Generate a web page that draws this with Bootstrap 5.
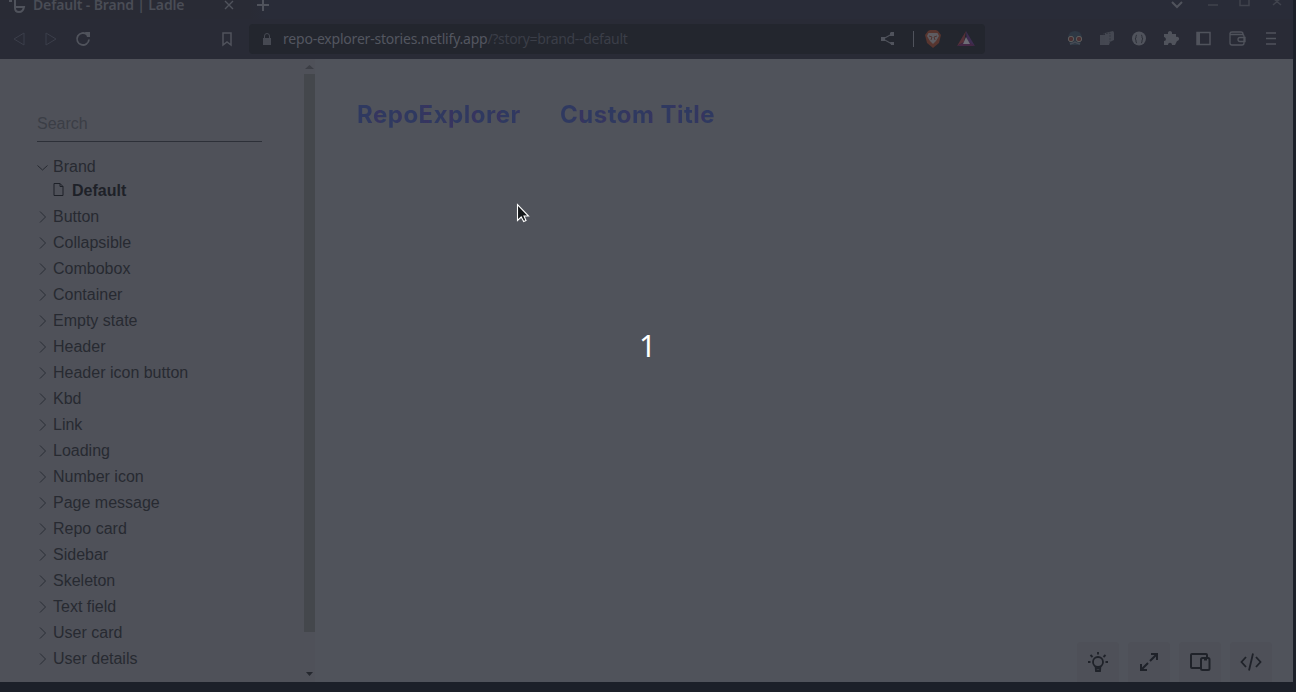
<!DOCTYPE html>
<html lang="en">
<head>
<meta charset="utf-8">
<title>Default - Brand | Ladle</title>
<link href="https://cdn.jsdelivr.net/npm/bootstrap@5.3.0/dist/css/bootstrap.min.css" rel="stylesheet">
<style>
body{background:#1c2029;font-family:"Liberation Sans",sans-serif;font-size:16px}
svg{display:block;flex:none;fill:none;stroke:currentColor}
.desktop{width:1296px;height:692px}
.browser{width:1293px;height:682px}
.chrome{height:59px;background:#292b36;color:#50535c;font-family:"Noto Sans",sans-serif;font-size:14px}
.tabs{height:19px;background:linear-gradient(90deg,#292b35 250px,#292c38 265px)}
.tabs>*{height:19px}
.tab-title{width:196px;margin-left:-4px;padding-left:11px;line-height:13px;margin-top:-2px;font-weight:600;letter-spacing:-.15px;white-space:nowrap;color:#4a4d56}
.tools{height:40px}
.address{width:736px;height:30px;margin-left:15px;background:#23262e;border-radius:4px}
.url{width:590px;margin-left:10px;white-space:nowrap;line-height:28px;letter-spacing:-.21px;color:#535660}
.url span{letter-spacing:-.33px;color:#3b3e48}
.page-area{background:#50535b;color:#272a31}
.side{width:304px;padding:44px 42px 0 37px;background:#4f5159}
.search{height:39px;border:0;border-bottom:1px solid #2d3038;border-radius:0;background:none!important;padding:3px 0 0;font-size:16px}
.search::placeholder{color:#3b3e46;opacity:1}
.tree{padding-top:12px;margin:0}
.tree li{height:26px;line-height:26px;white-space:nowrap}
.tree li:first-child{height:25px}
.tree .leaf{height:23px;line-height:23px;margin-bottom:2px;padding-left:17px;font-weight:700;color:#1e2128}
.tree svg{width:11px;height:12px;margin-right:5px;margin-left:0}
.tree .leaf svg{width:11px;height:15px;margin-right:7px;margin-top:-3px;margin-left:-1px;margin-right:8px}
.track{width:11px;padding:6px 0 4px;background:#4f5159}
.thumb{height:558px;background:#44474c;margin-top:5px}
.stories{padding:38px 0 0 42px;font-family:Inter,sans-serif;font-weight:700;font-size:24px;line-height:36px;letter-spacing:.5px}
.title-a{width:203px}
.brand-text{background:repeating-linear-gradient(90deg,#2f3960 0 12px,#38335f 24px);-webkit-background-clip:text;background-clip:text;color:transparent;white-space:nowrap}
.actions{padding-right:21px;gap:9px}
.action{width:42px;height:40px;background:#4e5058;border-radius:4px 4px 0 0;color:#1f2229}
.counter{left:639px;top:327px;font:30px/38px "Noto Sans",sans-serif;color:#fff;width:16px;text-align:center}
.pointer{left:516px;top:203px}
</style>
</head>
<body class="overflow-hidden">
<div class="desktop position-relative overflow-hidden">
<div class="browser d-flex flex-column">
  <header class="chrome flex-shrink-0">
    <div class="tabs d-flex overflow-hidden">
      <svg width="26" viewBox="0 0 26 19" stroke-width="2"><path d="M9 1h3M15-1v9q0 4 4 4t5-5H15"/></svg>
      <div class="tab-title">Default - Brand | Ladle</div>
      <svg width="24" viewBox="0 0 24 19" stroke-width="1.4"><path d="M7 1l8 8M15 1l-8 8"/></svg>
      <svg width="42" viewBox="0 0 42 19" stroke-width="2"><path d="M15 5h12M21 -1v12"/></svg>
      <svg class="ms-auto" width="133" viewBox="0 0 133 19" stroke-width="1.5"><path d="M12 2l5 5 5-5" stroke-width="2"/><path d="M48 5h10M80-2v7.500h9V-2M113-2l8 7M121-2l-8 7" opacity=".6"/></svg>
    </div>
    <div class="tools d-flex align-items-center">
      <svg width="234" height="40" viewBox="0 0 234 40"><path d="M14 20l10-6v12zM56 20l-10-6v12z" stroke="#3b3e4a"/><path d="M87 15.500a6 6 0 1 0 2 5" stroke-width="1.8"/><path d="M85 13h5v5h-3z" fill="currentColor" stroke="none"/><path d="M223 14h8v12l-4-3-4 3z" stroke-width="1.5"/></svg>
      <div class="address d-flex align-items-center">
        <svg width="24" height="30" viewBox="0 0 24 30" style="color:#464952"><path d="M14 14h8v7h-8z" fill="currentColor" stroke="none"/><path d="M15.500 14v-2a2.500 2.500 0 0 1 5 0v2"/></svg>
        <div class="url">repo-explorer-stories.netlify.app<span>/?story=brand--default</span></div>
        <svg width="112" height="30" viewBox="0 0 112 30"><path d="M19 10l-9 5 9 5" stroke-width="1.1"/><path d="M18 8h3v4h-4v-3zM8 13h4v4H8zM17 18h4v3h-3z" fill="currentColor" stroke="none"/><path d="M40.500 7v16"/><path d="M55 7l2-1h6l2 1 3 4-2 8-6 5-6-5-2-8z" fill="#57352f" stroke="none"/><path d="M55.500 9h9l1.500 3-3 5-3 3-3-3-3-5z" fill="#5e5c61" stroke="none"/><path d="M56 12l3 1-1 3M64 12l-3 1 1 3" stroke="#503431"/><path d="M93 7l-9 15 7-4z" fill="#553038" stroke="none"/><path d="M93 7l9 15-8-4z" fill="#3d2d51" stroke="none"/><path d="M84 22l7-4h5l6 4z" fill="#432744" stroke="none"/><path d="M93 13l4 7h-7z" fill="#6c6c75" stroke="none"/></svg>
      </div>
      <svg class="ms-auto" width="235" height="40" viewBox="0 0 235 40"><path d="M10 18q1-6 7-6t7 6l-2 8H12z" fill="#2e3844" stroke="none"/><path d="M12 25l3-1 2-1 2 1 3 1" stroke="#454a54" stroke-width="1.500"/><circle cx="13" cy="20" r="2.700" fill="#4b3033" stroke="#5c5d5d"/><circle cx="21" cy="20" r="2.700" fill="#4b3033" stroke="#5c5d5d"/><path d="M42 16h7v10h-7z" fill="#444751" stroke="none"/><path d="M47 14l8-2q1 1 1 2v7l-4 2-1 3h-4z" fill="#454852" stroke="none"/><path d="M45 15l7-1v9" stroke="#353842" stroke-dasharray="2 1"/><circle cx="81" cy="19.500" r="7" fill="currentColor" stroke="none"/><path d="M79 16c-2 0 0 3-2 4 2 0 0 4 2 4M83 16c2 0 0 3 2 4-2 0 0 4-2 4" stroke="#2c2f38"/><path d="M107 15h3c-1-4 5-4 4 0h4v3c4-1 4 4 1 4l-2 4h-3c0-3-4-3-4 0h-4v-4c3 0 2-4 0-4v-3z" fill="currentColor" stroke="none"/><path d="M139 13.500h13v12h-13z" stroke-width="1.500"/><path d="M139 14v11h3V14z" fill="currentColor" stroke="none"/><path d="M172 14.500q0-1.500 2-1.500h9q2 0 2 2v1M172 14v10q0 2 2 2h10q2 0 2-2v-7q0-1.500-2-1.500h-12M187 18.500h-5q-2 0-2 2t2 2h5z" stroke-width="1.3"/><path d="M208 14h10M208 19.500h10M208 25h10" stroke-width="1.6"/></svg>
    </div>
  </header>
  <main class="page-area d-flex flex-grow-1 overflow-hidden">
    <aside class="side flex-shrink-0">
      <input class="form-control search" placeholder="Search" aria-label="Search">
      <ul class="tree list-unstyled" id="stories"></ul>
    </aside>
    <div class="track d-flex flex-column align-items-center flex-shrink-0">
      <svg width="9" height="4"><path d="M0 4l4.500-4L9 4z" fill="#3c3e45" stroke="none"/></svg>
      <div class="thumb w-100"></div>
      <svg class="mt-auto" style="margin-bottom:2px" width="7" height="4"><path d="M0 0h7L3.500 4z" fill="#25282f" stroke="none"/></svg>
    </div>
    <section class="flex-grow-1 d-flex flex-column">
      <div class="stories d-flex"><div class="title-a"><span class="brand-text">RepoExplorer</span></div><span class="brand-text">Custom Title</span></div>
      <div class="actions d-flex mt-auto justify-content-end">
        <div class="action d-flex align-items-center justify-content-center"><svg width="22" height="22" viewBox="0 0 22 22" stroke-width="1.8"><circle cx="11" cy="11" r="5"/><path d="M8.500 15l.5 5h4l.5-5M9 17.500h4M11 1v2.500M3.500 4l2 2M18.500 4l-2 2M1 11h2.500M18.500 11H21"/></svg></div>
        <div class="action d-flex align-items-center justify-content-center"><svg width="22" height="22" viewBox="0 0 22 22" stroke-width="2"><path d="M13 3h6v6M19 3l-7 7M3 13v6h6M3 19l7-7"/></svg></div>
        <div class="action d-flex align-items-center justify-content-center"><svg width="22" height="22" viewBox="0 0 22 22" stroke-width="2"><path d="M11 17H3q-1 0-1-1V4q0-1 1-1h14q1 0 1 1v3"/><rect x="12" y="7" width="8.500" height="12" rx="1.500"/><path d="M15 8.500h3"/></svg></div>
        <div class="action d-flex align-items-center justify-content-center"><svg width="22" height="22" viewBox="0 0 22 22" stroke-width="1.8"><path d="M6 6l-4.500 5L6 16M16 6l4.500 5-4.500 5M13 2.500l-4 17"/></svg></div>
      </div>
    </section>
  </main>
</div>
<svg class="pointer position-absolute" width="15" height="21" viewBox="0 0 15 21"><path d="M1.500 1.500v16l3.700-3.500 2.500 4.500 2.300-1-2-4.500h4.500z" fill="#15181b" stroke="#fff" stroke-width="1.1"/></svg>
<div class="counter position-absolute">1</div>
</div>
<script src="https://cdn.jsdelivr.net/npm/bootstrap@5.3.0/dist/js/bootstrap.bundle.min.js"></script>
<script>
const names = ["Brand","Default","Button","Collapsible","Combobox","Container","Empty state","Header","Header icon button","Kbd","Link","Loading","Number icon","Page message","Repo card","Sidebar","Skeleton","Text field","User card","User details"];
const icons = {
  open: '<svg viewBox="0 0 11 12"><path d="M.5 4.500l5 4.500 5-4.500"/></svg>',
  page: '<svg viewBox="0 0 11 15"><path d="M1 1.500h6l3 3v9H1zM7 1.500v3h3"/></svg>',
  closed: '<svg viewBox="0 0 11 12"><path d="M3 .5L8.500 6 3 11.500" stroke-width=".9"/></svg>'
};
document.getElementById("stories").innerHTML = names.map((n, i) =>
  `<li class="d-flex align-items-center${i === 1 ? " leaf" : ""}">${i === 0 ? icons.open : i === 1 ? icons.page : icons.closed}${n}</li>`).join("");
</script>
</body>
</html>
